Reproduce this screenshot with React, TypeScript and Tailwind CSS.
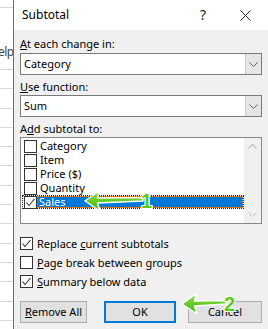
import React from "react";

function Box({ checked }: { checked?: boolean }) {
  return (
    <div className="w-[13px] h-[13px] border border-[#333333] bg-white flex items-center justify-center shrink-0">
      {checked ? (
        <svg width="11" height="11" viewBox="0 0 11 11">
          <path d="M1.5 5.5 L4 8.5 L9.5 2" stroke="#333333" strokeWidth="1.1" fill="none" />
        </svg>
      ) : null}
    </div>
  );
}

function Chevron({ color }: { color: string }) {
  return (
    <svg width="9" height="5" viewBox="0 0 9 5">
      <path d="M0.5 0.5 L4.5 4.5 L8.5 0.5" stroke={color} strokeWidth="1" fill="none" />
    </svg>
  );
}

function ChevronUp({ color }: { color: string }) {
  return (
    <svg width="9" height="5" viewBox="0 0 9 5">
      <path d="M0.5 4.5 L4.5 0.5 L8.5 4.5" stroke={color} strokeWidth="1.3" fill="none" />
    </svg>
  );
}

function Combo({ value }: { value: string }) {
  return (
    <div className="h-[22px] flex border border-[#7a7a7a] bg-white">
      <div className="flex-1 pl-[3px] flex items-center text-black">{value}</div>
      <div className="w-[16px] bg-[#e5e5e5] border-l border-[#c8c8c8] flex items-center justify-center">
        <Chevron color="#606060" />
      </div>
    </div>
  );
}

function Arrow({ len }: { len: number }) {
  return (
    <svg width={len + 4} height="26" viewBox={`-2 -2 ${len + 4} 26`}>
      <defs>
        <linearGradient id="g" x1="0" y1="0" x2="0" y2="1">
          <stop offset="0" stopColor="#8be03a" />
          <stop offset="1" stopColor="#3fb516" />
        </linearGradient>
      </defs>
      <path
        d={`M0 11 L14 1 L12.5 8 L${len} 7.5 L${len} 11 L12.5 13 L15 21 Z`}
        fill="url(#g)"
        stroke="white"
        strokeWidth="1.5"
        strokeLinejoin="round"
      />
    </svg>
  );
}

const outline =
  "[text-shadow:1px_0_white,-1px_0_white,0_1px_white,0_-1px_white,1px_1px_white,-1px_-1px_white,1px_-1px_white,-1px_1px_white]";

export default function App() {
  const items = ["Category", "Item", "Price ($)", "Quantity"];
  return (
    <div className="relative w-[268px] h-[329px] overflow-hidden flex bg-white font-['Noto_Sans',sans-serif] text-[11px] leading-[16px] text-black">
      {/* spreadsheet strip */}
      <div className="w-[13px] shrink-0 flex flex-col bg-white overflow-hidden">
        <div className="h-[8px] shrink-0 border-b border-[#d6d6d6]" />
        <div className="h-[36px] shrink-0" />
        <div className="h-[25px] shrink-0 text-[12px] text-[#444444] leading-[16px] -ml-[2px] tracking-[-0.5px] whitespace-nowrap">elp</div>
        {Array.from({ length: 14 }).map((_, i) => (
          <div key={i} className="h-[19.3px] shrink-0 border-t border-[#d9d9d9]" />
        ))}
      </div>
      {/* dialog */}
      <div className="flex-1 flex flex-col border-l border-[#6e6e6e]">
        <div className="h-[30px] bg-white flex items-center pl-[8px] text-[12px]">
          <span className="flex-1">Subtotal</span>
          <span className="w-[14px] text-[14px] text-[#222222] mr-[30px] text-center">?</span>
          <svg width="11" height="11" viewBox="0 0 11 11" className="mr-[17px]">
            <path d="M0.5 0.5 L10.5 10.5 M10.5 0.5 L0.5 10.5" stroke="#222222" strokeWidth="1" />
          </svg>
        </div>
        <div className="flex-1 bg-[#f0f0f0] pl-[6px] pr-[6px] pt-[6px] flex flex-col">
          <div className="h-[16px]">
            <span className="underline">A</span>t each change in:
          </div>
          <div className="mt-[1px]">
            <Combo value="Category" />
          </div>
          <div className="h-[16px] mt-[4px]">
            <span className="underline">U</span>se function:
          </div>
          <div>
            <Combo value="Sum" />
          </div>
          <div className="h-[16px] mt-[4px]">
            A<span className="underline">d</span>d subtotal to:
          </div>
          <div className="h-[87px] border border-[#828790] bg-white flex">
            <div className="flex-1 pt-[1px] pl-[1px] flex flex-col leading-[14px]">
              {items.map((t) => (
                <div key={t} className="h-[14px] flex items-center">
                  <div className="w-[16px] flex justify-center">
                    <Box />
                  </div>
                  <span className="pl-[2px]">{t}</span>
                </div>
              ))}
              <div className="h-[14px] flex items-center border border-dotted border-[#222222]">
                <div className="w-[14px] flex justify-center">
                  <Box checked />
                </div>
                <div className="flex-1 h-full bg-[#0078d7] text-white pl-[2px] flex items-center outline-1 outline-dotted outline-[#ff8c1a] -outline-offset-1">
                  Sales
                </div>
              </div>
            </div>
            <div className="w-[17px] bg-[#f0f0f0] flex flex-col items-center justify-between py-[6px]">
              <ChevronUp color="#c2c2c2" />
              <Chevron color="#c2c2c2" />
            </div>
          </div>
          <div className="mt-[10px] flex flex-col">
            <div className="h-[19px] flex items-center">
              <Box checked />
              <span className="pl-[4px]">
                Replace <span className="underline">c</span>urrent subtotals
              </span>
            </div>
            <div className="h-[19px] flex items-center">
              <Box />
              <span className="pl-[4px]">
                <span className="underline">P</span>age break between groups
              </span>
            </div>
            <div className="h-[19px] flex items-center">
              <Box checked />
              <span className="pl-[4px]">
                <span className="underline">S</span>ummary below data
              </span>
            </div>
          </div>
          <div className="mt-[10px] flex">
            <div className="w-[67px] h-[22px] bg-[#e1e1e1] border border-[#adadad] flex items-center justify-center">
              <span>
                <span className="underline">R</span>emove All
              </span>
            </div>
            <div className="ml-[17px] w-[72px] h-[22px] bg-[#e1e1e1] border-2 border-[#0078d7] flex items-center justify-center">
              OK
            </div>
            <div className="ml-[12px] flex-1 h-[22px] bg-[#e1e1e1] border border-[#adadad] flex items-center justify-center">
              Cancel
            </div>
          </div>
        </div>
      </div>
      {/* annotations */}
      <div className="absolute left-[83px] top-[188px] flex items-center">
        <Arrow len={58} />
        <span className={`-ml-[4px] text-[20px] leading-[20px] font-bold text-[#5cc81c] font-['Liberation_Sans',sans-serif] ${outline}`}>
          1
        </span>
      </div>
      <div className="absolute left-[180px] top-[291px] flex items-center">
        <Arrow len={44} />
        <span className={`-ml-[4px] text-[20px] leading-[20px] font-bold text-[#5cc81c] font-['Liberation_Sans',sans-serif] ${outline}`}>
          2
        </span>
      </div>
    </div>
  );
}
